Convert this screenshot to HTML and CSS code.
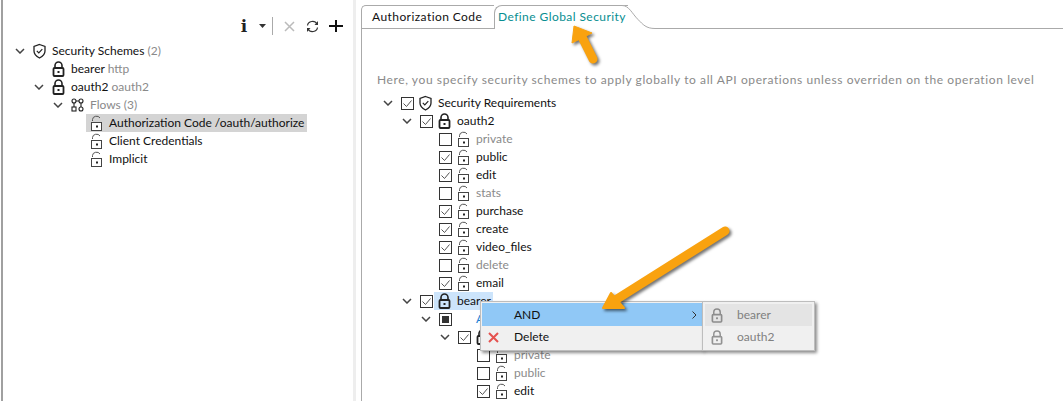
FILE: index.html
```html
<!DOCTYPE html>
<html lang="en">
<head>
<meta charset="utf-8">
<title>Security</title>
<link rel="stylesheet" href="styles.css">
</head>
<body>
<svg class="defs" width="0" height="0">
  <symbol id="lock" viewBox="0 0 13 16"><path d="M3 7V4.500a3.500 3.500 0 0 1 7 0V7" fill="none" stroke="#222" stroke-width="1.600"/><rect x="1.500" y="7" width="10" height="8" rx="1" fill="none" stroke="#222" stroke-width="1.800"/><rect x="5.500" y="10" width="2" height="2" fill="#222"/></symbol>
  <symbol id="open" viewBox="0 0 13 16"><path d="M2.500 6V4.500a4 3.500 0 0 1 7.500-1.500" fill="none" stroke="#555" stroke-width="1"/><rect x="1.500" y="7.500" width="10" height="8" fill="#fff" stroke="#444"/><rect x="6" y="10.500" width="2" height="2" fill="#222"/></symbol>
  <symbol id="shield" viewBox="0 0 13 16"><path d="M6.500 1.500l5.500 2v4.500c0 3.500-2.500 5.500-5.500 7-3-1.500-5.500-3.500-5.500-7V3.500z" fill="none" stroke="#222" stroke-width="1.300"/><path d="M3.800 7.800l2 2 3.500-3.600" fill="none" stroke="#222" stroke-width="1.200"/></symbol>
  <symbol id="chev" viewBox="0 0 10 6"><path d="M1 1l4 4 4-4" fill="none" stroke="#444" stroke-width="1.500"/></symbol>
  <symbol id="check" viewBox="0 0 13 13"><rect x=".5" y=".5" width="12" height="12" fill="#fff" stroke="#333"/><path d="M2.500 6.500l3 3 5-6" fill="none" stroke="#555" stroke-width="1"/></symbol>
  <symbol id="box" viewBox="0 0 13 13"><rect x=".5" y=".5" width="12" height="12" fill="#fff" stroke="#333"/></symbol>
  <symbol id="mixed" viewBox="0 0 13 13"><rect x=".5" y=".5" width="12" height="12" fill="#fff" stroke="#333"/><rect x="3" y="3" width="7" height="7" fill="#333"/></symbol>
</svg>

<main class="page">
  <section class="left">
    <div class="toolbar">
      <span class="tool-i">i</span>
      <svg class="tool-drop" width="7" height="4" viewBox="0 0 7 4"><path d="M0 0h7L3.500 4z" fill="#333"/></svg>
      <span class="tool-sep"></span>
      <svg class="tool-x" width="11" height="11" viewBox="0 0 11 11"><path d="M1 1l9 9M10 1l-9 9" stroke="#bbb" stroke-width="1.500"/></svg>
      <svg class="tool-sync" width="13" height="13" viewBox="0 0 13 13"><path d="M1.500 5.500A5 4.500 0 0 1 11 4M11.500 7.500A5 4.500 0 0 1 2 9" fill="none" stroke="#333" stroke-width="1.200"/><path d="M12 1v4H8.500zM1 12V8h3.500z" fill="#333"/></svg>
      <svg class="tool-plus" width="14" height="12" viewBox="0 0 14 12"><path d="M7 0v12M0 6h14" stroke="#111" stroke-width="2"/></svg>
    </div>
    <ul class="tree">
      <li class="row i0"><svg class="chev"><use href="#chev"/></svg><svg class="ic"><use href="#shield"/></svg><span class="t">Security Schemes <em>(2)</em></span></li>
      <li class="row i1"><span class="chev"></span><svg class="ic"><use href="#lock"/></svg><span class="t">bearer <em>http</em></span></li>
      <li class="row i1"><svg class="chev"><use href="#chev"/></svg><svg class="ic"><use href="#lock"/></svg><span class="t">oauth2 <em>oauth2</em></span></li>
      <li class="row i2"><svg class="chev"><use href="#chev"/></svg><svg class="ic" viewBox="0 0 13 14"><g fill="none" stroke="#222" stroke-width="1.100"><circle cx="3" cy="3" r="2"/><circle cx="10" cy="3" r="2"/><circle cx="10" cy="11" r="2"/><rect x="1" y="9" width="4" height="4"/><path d="M3 5v4M10 5v4M5 3h3"/></g></svg><span class="t muted">Flows (3)</span></li>
      <li class="row i3"><span class="sel sel-on"><svg class="ic"><use href="#open"/></svg><span class="t">Authorization Code /oauth/authorize</span></span></li>
      <li class="row i3"><span class="sel"><svg class="ic"><use href="#open"/></svg><span class="t">Client Credentials</span></span></li>
      <li class="row i3"><span class="sel"><svg class="ic"><use href="#open"/></svg><span class="t">Implicit</span></span></li>
    </ul>
  </section>

  <section class="right">
    <div class="tabs">
      <span class="tab">Authorization Code</span>
      <span class="tab active">Define Global Security</span>
      <svg class="tab-curve" width="35" height="24" viewBox="0 0 35 24"><path d="M0 .5h2c7 0 10 8 16 14 5 5 8 9 17 9" fill="#fff" stroke="#aaa"/></svg>
      <span class="tab-rest"></span>
    </div>
    <div class="content">
      <p class="intro">Here, you specify security schemes to apply globally to all API operations unless overriden on the operation level</p>
      <ul class="tree req">
        <li class="row r0"><svg class="chev"><use href="#chev"/></svg><svg class="cb"><use href="#check"/></svg><svg class="ic"><use href="#shield"/></svg><span class="t">Security Requirements</span></li>
        <li class="row r1"><svg class="chev"><use href="#chev"/></svg><svg class="cb"><use href="#check"/></svg><svg class="ic"><use href="#lock"/></svg><span class="t">oauth2</span></li>
        <li class="row r2"><svg class="cb"><use href="#box"/></svg><svg class="ic"><use href="#open"/></svg><span class="t muted">private</span></li>
        <li class="row r2"><svg class="cb"><use href="#check"/></svg><svg class="ic"><use href="#open"/></svg><span class="t">public</span></li>
        <li class="row r2"><svg class="cb"><use href="#check"/></svg><svg class="ic"><use href="#open"/></svg><span class="t">edit</span></li>
        <li class="row r2"><svg class="cb"><use href="#box"/></svg><svg class="ic"><use href="#open"/></svg><span class="t muted">stats</span></li>
        <li class="row r2"><svg class="cb"><use href="#check"/></svg><svg class="ic"><use href="#open"/></svg><span class="t">purchase</span></li>
        <li class="row r2"><svg class="cb"><use href="#check"/></svg><svg class="ic"><use href="#open"/></svg><span class="t">create</span></li>
        <li class="row r2"><svg class="cb"><use href="#check"/></svg><svg class="ic"><use href="#open"/></svg><span class="t">video_files</span></li>
        <li class="row r2"><svg class="cb"><use href="#box"/></svg><svg class="ic"><use href="#open"/></svg><span class="t muted">delete</span></li>
        <li class="row r2"><svg class="cb"><use href="#check"/></svg><svg class="ic"><use href="#open"/></svg><span class="t">email</span></li>
        <li class="row r1"><svg class="chev"><use href="#chev"/></svg><svg class="cb"><use href="#check"/></svg><span class="hl"><svg class="ic"><use href="#lock"/></svg><span class="t">bearer</span></span></li>
        <li class="row r2b"><svg class="chev"><use href="#chev"/></svg><svg class="cb"><use href="#mixed"/></svg><span class="t and">AND</span></li>
        <li class="row r3"><svg class="chev"><use href="#chev"/></svg><svg class="cb"><use href="#check"/></svg><svg class="ic"><use href="#lock"/></svg></li>
        <li class="row r4"><svg class="cb"><use href="#box"/></svg><svg class="ic"><use href="#open"/></svg><span class="t muted">private</span></li>
        <li class="row r4"><svg class="cb"><use href="#box"/></svg><svg class="ic"><use href="#open"/></svg><span class="t muted">public</span></li>
        <li class="row r4"><svg class="cb"><use href="#check"/></svg><svg class="ic"><use href="#open"/></svg><span class="t">edit</span></li>
      </ul>
    </div>
  </section>
</main>

<div class="menu">
  <div class="mi on"><span class="mi-icon"></span><span class="mi-label">AND</span><svg class="mi-arrow" width="5" height="8" viewBox="0 0 5 8"><path d="M.5.5L4 4 .5 7.500" fill="none" stroke="#333"/></svg></div>
  <div class="mi"><span class="mi-icon"><svg width="11" height="11" viewBox="0 0 11 11"><path d="M1 1l9 9M10 1l-9 9" stroke="#e5524f" stroke-width="2"/></svg></span><span class="mi-label">Delete</span></div>
</div>
<div class="submenu">
  <div class="si on"><svg class="si-ic"><use href="#lock"/></svg><span>bearer</span></div>
  <div class="si"><svg class="si-ic"><use href="#lock"/></svg><span>oauth2</span></div>
</div>

<svg class="arrow arrow-up" width="40" height="50" viewBox="0 0 40 50">
  <path d="M17 17L28 39" stroke="#f9a20f" stroke-width="9" stroke-linecap="round" fill="none"/>
  <path d="M9 6L7 23 27 13z" fill="#f9a20f" stroke="#f9a20f" stroke-linejoin="round"/>
</svg>
<svg class="arrow arrow-big" width="140" height="100" viewBox="0 0 140 100">
  <path d="M130 11L22 79" stroke="#f9a20f" stroke-width="9" stroke-linecap="round" fill="none"/>
  <path d="M8 88L16 73 29 88z" fill="#f9a20f" stroke="#f9a20f" stroke-width="2" stroke-linejoin="round"/>
</svg>
</body>
</html>
```

FILE: styles.css
```css
* { box-sizing: border-box; }
html, body { margin: 0; height: 401px; overflow: hidden; background: #fff; }
body { font: 12px/18px Lato, "Noto Sans", sans-serif; color: #111; position: relative; }
.defs { position: absolute; }
ul { list-style: none; margin: 0; padding: 0; }
em { font-style: normal; color: #8a8a8a; }

.page { display: flex; height: 401px; }
.left { width: 352px; margin-left: 1px; border-left: 2px solid #a0a0a0; flex: none; }
.right { flex: 1; padding: 5px 0 0 8px; min-width: 0; background: linear-gradient(90deg, #eee 3px, #fff 3px); }

.toolbar { height: 37px; padding: 15px 10px 0 0; display: flex; justify-content: flex-end; align-items: center; }
.tool-i { font: bold 17px/18px "DejaVu Serif", serif; color: #222; width: 10px; margin-right: 10px; text-align: center; }
.tool-drop { margin-right: 6px; }
.tool-sep { width: 1px; height: 18px; background: #aaa; margin-right: 11px; }
.tool-x { margin-right: 11px; }
.tool-sync { margin-right: 10px; }

.left .tree { padding-top: 5px; }
.row { height: 18px; display: flex; align-items: center; white-space: nowrap; }
.chev { width: 10px; height: 6px; margin-right: 8px; flex: none; }
span.chev { height: 1px; }
.ic { width: 13px; height: 16px; flex: none; margin-right: 6px; }
.t { display: block; }
.muted { color: #8a8a8a; }
.i0 { padding-left: 12px; }
.i1 { padding-left: 31px; }
.i2 { padding-left: 50px; }
.i3 { padding-left: 83px; }
.sel { display: flex; align-items: center; width: 221px; padding-left: 4px; height: 18px; overflow: hidden; }
.sel-on { background: #d4d4d4; }

.tabs { height: 24px; display: flex; }
.tab { height: 24px; border: 1px solid #aaa; border-right: none; border-radius: 5px 0 0 0; letter-spacing: .43px; overflow: hidden; white-space: nowrap; flex: none; }
.tab:first-child { width: 133px; padding: 2px 0 0 10px; }
.tab.active { width: 134px; padding: 2px 0 0 3px; color: #088e91; border-bottom: none; border-radius: 8px 0 0 0; }
.tab-curve { flex: none; margin-left: -8px; }
.tab-rest { flex: 1; border-bottom: 1px solid #aaa; }
.content { border-left: 1px solid #aaa; height: 372px; padding-left: 15px; background: #fff; }
.intro { margin: 0; padding-top: 42px; color: #8a8a8a; white-space: nowrap; height: 65px; letter-spacing: .6px; }
.cb { width: 13px; height: 13px; flex: none; margin-right: 5px; }
.r0 { padding-left: 6px; }
.r1 { padding-left: 25px; }
.r2 { padding-left: 62px; }
.r2b { padding-left: 44px; }
.r3 { padding-left: 63px; }
.r4 { padding-left: 100px; }
.hl { display: flex; align-items: center; background: #cce4fb; height: 18px; padding: 0 2px 0 4px; margin-left: -4px; }
.and { color: #1c7fd6; margin-left: 19px; }

.menu { position: absolute; left: 480px; top: 301px; width: 223px; height: 50px; background: #f0f0f0; border: 1px solid #bdbdbd; padding: 1px 0 1px 1px; box-shadow: 2px 2px 3px rgba(0,0,0,.45); z-index: 2; }
.mi { height: 22px; display: flex; align-items: center; }
.mi.on { height: 23px; background: #90c8f6; }
.mi-icon { width: 32px; display: flex; padding-left: 6px; flex: none; }
.mi-label { flex: 1; }
.mi-arrow { margin-right: 5px; }
.submenu { position: absolute; left: 702px; top: 301px; width: 113px; height: 50px; background: #f0f0f0; border: 1px solid #bdbdbd; padding: 2px; box-shadow: 2px 2px 3px rgba(0,0,0,.45); z-index: 3; color: #808080; }
.si { height: 22px; display: flex; align-items: center; padding-left: 6px; }
.si.on { background: #e4e4e4; }
.si-ic { width: 12px; height: 15px; margin-right: 14px; opacity: .45; }

.arrow { position: absolute; z-index: 4; filter: drop-shadow(2px 2px 1.500px rgba(0,0,0,.55)); }
.arrow-up { left: 565px; top: 20px; }
.arrow-big { left: 595px; top: 220px; }
```
